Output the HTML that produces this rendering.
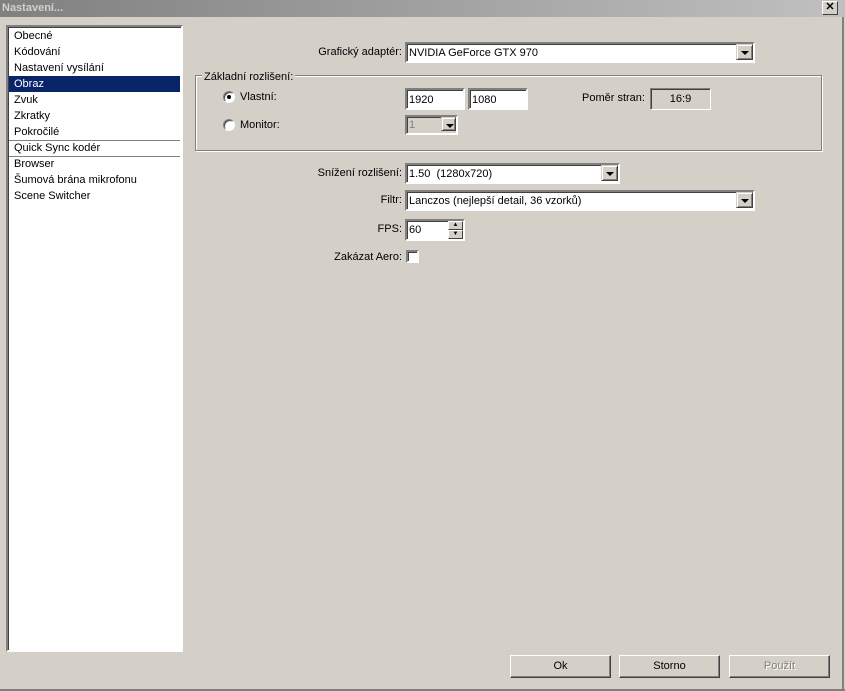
<!DOCTYPE html>
<html><head><meta charset="utf-8"><style>
*{box-sizing:border-box;margin:0;padding:0}
body{width:845px;height:691px;background:#d4d0c8;font-family:"Liberation Sans",sans-serif;font-size:11px;color:#000;position:relative;overflow:hidden}
.a{position:absolute}
.title{left:0;top:0;width:845px;height:17px;background:linear-gradient(90deg,#808080,#c0c0c0);color:#d4d0c8;font-weight:bold;font-size:11px;padding:2px 2px;}
.close{left:822px;top:1px;width:16px;height:14px;background:#d4d0c8;border:1px solid;border-color:#fff #404040 #404040 #fff;font-size:11px;line-height:11px;text-align:center;font-weight:bold}
.sunk{border:2px solid;border-color:#808080 #fff #fff #808080;box-shadow:inset 1px 1px 0 #404040;background:#fff}
.list{left:6px;top:25px;width:177px;height:627px}
.li{position:absolute;left:1px;width:171px;height:16px;padding-left:5px;line-height:16px}
.sel{background:#0a246a;color:#fff}
.sep{position:absolute;left:1px;width:171px;height:1px;background:#808080}
.lbl{position:absolute;text-align:right;line-height:14px}
.field{position:absolute;padding:3px 2px;line-height:13px}
.dd{position:absolute;right:0;top:0;width:17px;height:16px;background:#d4d0c8;border:1px solid;border-color:#d4d0c8 #404040 #404040 #d4d0c8;box-shadow:inset 1px 1px 0 #fff,inset -1px -1px 0 #808080}
.dd:after{content:"";position:absolute;left:4px;top:6px;border-left:4px solid transparent;border-right:4px solid transparent;border-top:4px solid #000}
.group{left:195px;top:75px;width:627px;height:76px;border:1px solid #808080;box-shadow:1px 1px 0 #fff,inset 1px 1px 0 #fff}
.legend{left:202px;top:70px;background:#d4d0c8;padding:0 2px;line-height:14px}
.radio{position:absolute;width:12px;height:12px;border-radius:50%;background:#fff;border:1px solid;border-color:#808080 #fff #fff #808080;box-shadow:inset 1px 1px 0 #404040}
.btn{position:absolute;top:655px;width:101px;height:23px;border:1px solid;border-color:#fff #404040 #404040 #fff;box-shadow:inset -1px -1px 0 #808080;text-align:center;line-height:21px}
</style></head><body>
<div class="a title">Nastavení...</div>
<div class="a close">✕</div>
<div class="a" style="left:842px;top:17px;width:2px;height:674px;background:#808080"></div>
<div class="a" style="left:0;top:689px;width:845px;height:2px;background:#808080"></div>

<div class="a list sunk">
<div class="li" style="top:1px">Obecné</div>
<div class="li" style="top:17px">Kódování</div>
<div class="li" style="top:33px">Nastavení vysílání</div>
<div class="li sel" style="top:49px">Obraz</div>
<div class="li" style="top:65px">Zvuk</div>
<div class="li" style="top:81px">Zkratky</div>
<div class="li" style="top:97px">Pokročilé</div>
<div class="sep" style="top:113px"></div>
<div class="li" style="top:113px">Quick Sync kodér</div>
<div class="sep" style="top:129px"></div>
<div class="li" style="top:129px">Browser</div>
<div class="li" style="top:145px">Šumová brána mikrofonu</div>
<div class="li" style="top:161px">Scene Switcher</div>
</div>

<div class="lbl" style="left:250px;width:152px;top:45px">Grafický adaptér:</div>
<div class="field sunk" style="left:405px;top:42px;width:350px;height:21px">NVIDIA GeForce GTX 970<div class="dd" style="top:0;right:0"></div></div>

<div class="a group"></div>
<div class="a legend">Základní rozlišení:</div>
<div class="radio" style="left:223px;top:91px"><div style="position:absolute;left:3px;top:3px;width:4px;height:4px;background:#000;border-radius:50%"></div></div>
<div class="lbl" style="left:240px;top:90px">Vlastní:</div>
<div class="field sunk" style="left:405px;top:88px;width:60px;height:22px;padding-top:4px">1920</div>
<div class="field sunk" style="left:468px;top:88px;width:60px;height:22px;padding-top:4px">1080</div>
<div class="lbl" style="left:582px;top:91px">Poměr stran:</div>
<div class="field" style="left:650px;top:88px;width:61px;height:22px;border:1px solid;border-color:#808080 #fff #fff #808080;box-shadow:inset 1px 1px 0 #404040;text-align:center;padding-top:4px">16:9</div>
<div class="radio" style="left:223px;top:119px"></div>
<div class="lbl" style="left:240px;top:118px">Monitor:</div>
<div class="field sunk" style="left:405px;top:115px;width:53px;height:20px;background:#d4d0c8;color:#808080;padding-top:2px">1<div class="dd" style="height:14px;width:15px"></div></div>

<div class="lbl" style="left:250px;width:152px;top:166px">Snížení rozlišení:</div>
<div class="field sunk" style="left:405px;top:163px;width:215px;height:21px">1.50 &nbsp;(1280x720)<div class="dd"></div></div>
<div class="lbl" style="left:250px;width:152px;top:193px">Filtr:</div>
<div class="field sunk" style="left:405px;top:190px;width:350px;height:21px">Lanczos (nejlepší detail, 36 vzorků)<div class="dd"></div></div>
<div class="lbl" style="left:250px;width:152px;top:222px">FPS:</div>
<div class="field sunk" style="left:405px;top:219px;width:60px;height:22px">60
<div style="position:absolute;right:0;top:0;width:15px;height:9px;background:#d4d0c8;border:1px solid;border-color:#fff #404040 #404040 #fff;font-size:6px;line-height:6px;text-align:center">▲</div>
<div style="position:absolute;right:0;top:9px;width:15px;height:9px;background:#d4d0c8;border:1px solid;border-color:#fff #404040 #404040 #fff;font-size:6px;line-height:6px;text-align:center">▼</div></div>
<div class="lbl" style="left:250px;width:152px;top:250px">Zakázat Aero:</div>
<div class="a sunk" style="left:406px;top:250px;width:13px;height:13px"></div>

<div class="btn" style="left:510px">Ok</div>
<div class="btn" style="left:619px">Storno</div>
<div class="btn" style="left:729px;color:#808080;text-shadow:1px 1px 0 #fff">Použít</div>
</body></html>
